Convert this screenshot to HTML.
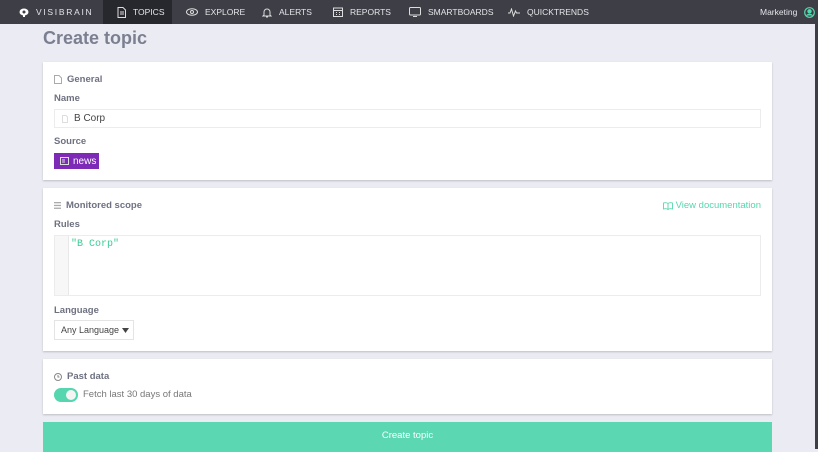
<!DOCTYPE html>
<html><head><meta charset="utf-8"><style>
*{box-sizing:border-box;margin:0;padding:0}
body{width:818px;height:449px;overflow:hidden;background:#ebebf3;font-family:"Liberation Sans",sans-serif;position:relative}
.nav{position:absolute;left:0;top:0;width:818px;height:24px;background:#3e3f46;color:#e4e4ea;font-size:8.5px}
.nav .i{position:absolute;top:0;height:24px;line-height:25px;display:flex;align-items:center;gap:7px;white-space:nowrap}
.act{background:#27282d}
.sb{position:absolute;right:0;top:0;width:3px;height:449px;background:#3e3f46}
h1{position:absolute;left:43px;top:28px;font-size:18px;color:#7b7f90;font-weight:bold}
.card{position:absolute;left:43px;width:729px;background:#fff;box-shadow:0 1px 2px rgba(0,0,0,.2)}
.t{position:absolute;left:11px;font-size:9.5px;color:#6e7181;font-weight:bold;display:flex;align-items:center;gap:5px}
.l{position:absolute;left:11px;font-size:9.5px;color:#6e7181;font-weight:bold}
.inp{position:absolute;left:11px;width:707px;border:1px solid #ececec}
</style></head><body>
<div class="nav">
<div class="i" style="left:19px;letter-spacing:1.7px"><svg width="10" height="9" viewBox="0 0 10 9"><ellipse cx="5" cy="4" rx="4.5" ry="3.5" fill="#fff"/><circle cx="5" cy="4" r="1.5" fill="#3e3f46"/><rect x="4" y="7" width="2" height="2" fill="#fff"/></svg>VISIBRAIN</div>
<div class="i act" style="left:103px;width:69px;padding-left:14px"><svg width="9" height="11" viewBox="0 0 9 11" fill="none" stroke="#ddd"><path d="M1 .5h5l2.5 2.5v7.5H1z M3 5h4M3 7h4"/></svg>TOPICS</div>
<div class="i" style="left:186px"><svg width="12" height="8" viewBox="0 0 12 8" fill="none" stroke="#ddd"><ellipse cx="6" cy="4" rx="5.5" ry="3.3"/><circle cx="6" cy="4" r="1.5"/></svg>EXPLORE</div>
<div class="i" style="left:262px"><svg width="10" height="11" viewBox="0 0 10 11" fill="none" stroke="#ddd"><path d="M2 8V5a3 3 0 0 1 6 0v3l1 1H1z M4 10h2"/></svg>ALERTS</div>
<div class="i" style="left:333px"><svg width="10" height="10" viewBox="0 0 10 10" fill="none" stroke="#ddd"><rect x=".5" y="1" width="9" height="8.5"/><path d="M.5 3.5h9M3 5.5h1M6 5.5h1M3 7.5h1M6 7.5h1"/></svg>REPORTS</div>
<div class="i" style="left:409px"><svg width="12" height="10" viewBox="0 0 12 10" fill="none" stroke="#ddd"><rect x=".5" y=".5" width="11" height="7.5" rx="1"/><path d="M4 9.5h4"/></svg>SMARTBOARDS</div>
<div class="i" style="left:508px"><svg width="12" height="9" viewBox="0 0 12 9" fill="none" stroke="#ddd"><path d="M0 5h2l1.5-4 2 7 2-5 1 2H12"/></svg>QUICKTRENDS</div>
<div class="i" style="left:760px">Marketing<svg width="11" height="11" viewBox="0 0 11 11" fill="none" stroke="#55d6ae" stroke-width="1.2"><circle cx="5.5" cy="5.5" r="4.8"/><circle cx="5.5" cy="4.3" r="1.6" fill="#55d6ae"/><path d="M2.8 8.5a3 2 0 0 1 5.4 0" fill="#55d6ae"/></svg></div>
</div>
<div class="sb"></div>
<h1>Create topic</h1>
<div class="card" style="top:62px;height:118px">
<div class="t" style="top:12px"><svg width="8" height="9" viewBox="0 0 8 9" fill="none" stroke="#aaa"><path d="M.5.5h4.5l2.5 2.5v5.5h-7z"/></svg>General</div>
<div class="l" style="top:31px">Name</div>
<div class="inp" style="top:47px;height:19px;font-size:10px;color:#444;line-height:18px;padding-left:19px">B Corp<svg style="position:absolute;left:7px;top:5px" width="6" height="8" viewBox="0 0 6 8" fill="none" stroke="#ddd"><path d="M.5.5h3.5l1.5 1.5v5.5h-5z"/></svg></div>
<div class="l" style="top:74px">Source</div>
<div style="position:absolute;left:11px;top:91px;width:45px;height:16px;background:#7d2bb6;color:#fff;font-size:10px;line-height:17px;padding-left:19px;white-space:nowrap"><svg style="position:absolute;left:6px;top:4px" width="9" height="8" viewBox="0 0 9 8" fill="none" stroke="#ddd"><rect x=".5" y=".5" width="8" height="7"/><path d="M2 3h3M2 5h3"/></svg>news</div>
</div>
<div class="card" style="top:188px;height:163px">
<div class="t" style="top:12px"><svg width="7" height="7" viewBox="0 0 7 7" fill="#aaa"><rect y="0" width="7" height="1.3"/><rect y="2.8" width="7" height="1.3"/><rect y="5.6" width="7" height="1.3"/></svg>Monitored scope</div>
<div style="position:absolute;right:11px;top:12px;font-size:9.5px;color:#55d6ae;display:flex;align-items:center;gap:3px"><svg width="10" height="8" viewBox="0 0 10 8" fill="none" stroke="#55d6ae" stroke-width=".9"><path d="M5 1.5C4 .8 2 .6.5 1v6C2 6.6 4 6.8 5 7.5 6 6.8 8 6.6 9.5 7V1C8 .6 6 .8 5 1.5zM5 1.5v6"/></svg>View documentation</div>
<div class="l" style="top:31px">Rules</div>
<div class="inp" style="top:47px;height:61px"><div style="position:absolute;left:0;top:0;width:14px;height:59px;background:#f7f7f7;border-right:1px solid #e8e8e8"></div><div style="position:absolute;left:16px;top:3px;font-family:'Liberation Mono',monospace;font-size:10px;color:#3dcc97">"B Corp"</div></div>
<div class="l" style="top:117px">Language</div>
<div style="position:absolute;left:11px;top:132px;width:80px;height:20px;border:1px solid #e4e4e4;font-size:9px;color:#444;line-height:19px;padding-left:6px;white-space:nowrap">Any Language<svg style="position:absolute;left:67px;top:7px" width="7" height="5" viewBox="0 0 7 5"><path d="M0 0h7L3.5 5z" fill="#444"/></svg></div>
</div>
<div class="card" style="top:359px;height:55px">
<div class="t" style="top:12px"><svg width="8" height="8" viewBox="0 0 8 8" fill="none" stroke="#888"><circle cx="4" cy="4" r="3.5"/><path d="M4 2v2h1.5"/></svg>Past data</div>
<div style="position:absolute;left:11px;top:29px;width:24px;height:14px;border-radius:7px;background:#55d6ae"><div style="position:absolute;right:2px;top:2px;width:10px;height:10px;border-radius:5px;background:#f4f4f4"></div></div>
<div style="position:absolute;left:40px;top:30px;font-size:9.5px;color:#777">Fetch last 30 days of data</div>
</div>
<div style="position:absolute;left:43px;top:422px;width:729px;height:30px;background:#5bd8b1;color:#fff;font-size:9.5px;text-align:center;line-height:27px">Create topic</div>
</body></html>
